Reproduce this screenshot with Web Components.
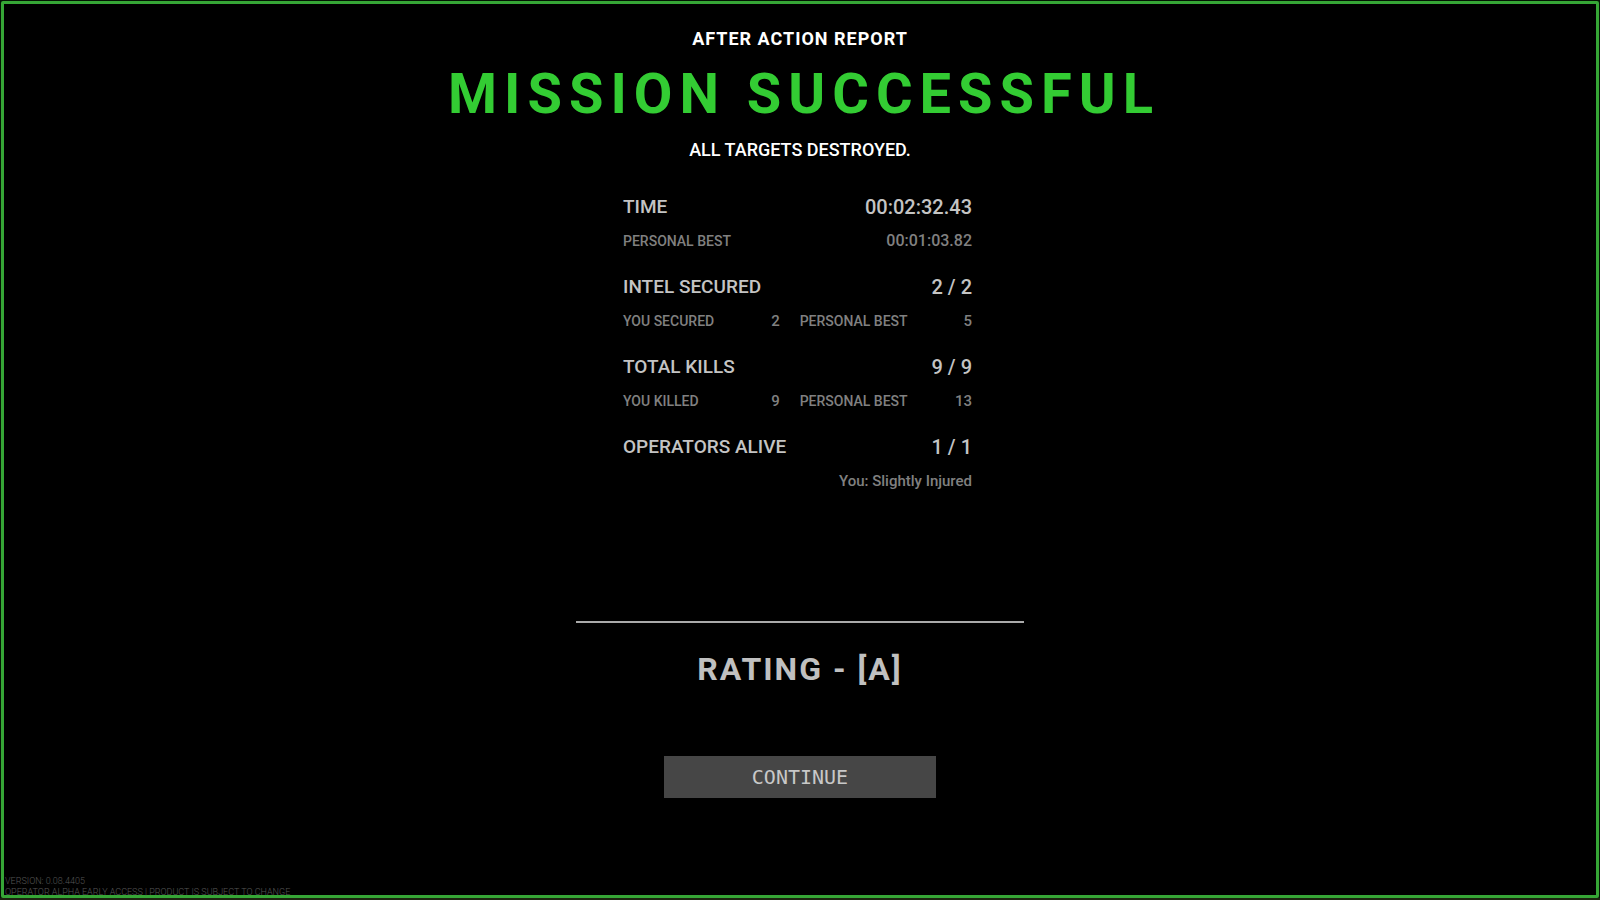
<!DOCTYPE html>
<html lang="en">
<head>
<meta charset="utf-8">
<title>After Action Report</title>
<style>
html, body { margin: 0; background: #000; }
body { font-family: Roboto, "Liberation Sans", sans-serif; color: #fff; }
</style>
</head>
<body>
<game-screen>
  <report-heading slot="heading">
    <span slot="kicker">AFTER ACTION REPORT</span>
    <span slot="title">MISSION SUCCESSFUL</span>
    <span slot="summary">ALL TARGETS DESTROYED.</span>
  </report-heading>
  <stat-list>
    <stat-group label="TIME" value="00:02:32.43">
      <stat-detail label="PERSONAL BEST" value="00:01:03.82" large></stat-detail>
    </stat-group>
    <stat-group label="INTEL SECURED" value="2 / 2">
      <stat-detail label="YOU SECURED" value="2"></stat-detail>
      <stat-detail label="PERSONAL BEST" value="5"></stat-detail>
    </stat-group>
    <stat-group label="TOTAL KILLS" value="9 / 9">
      <stat-detail label="YOU KILLED" value="9"></stat-detail>
      <stat-detail label="PERSONAL BEST" value="13"></stat-detail>
    </stat-group>
    <stat-group label="OPERATORS ALIVE" value="1 / 1">
      <stat-detail value="You: Slightly Injured"></stat-detail>
    </stat-group>
  </stat-list>
  <mission-rating>RATING - [A]</mission-rating>
  <action-button>CONTINUE</action-button>
  <build-info slot="footer">
    <span>VERSION: 0.08.4405</span>
    <span>OPERATOR ALPHA EARLY ACCESS | PRODUCT IS SUBJECT TO CHANGE</span>
  </build-info>
</game-screen>
<script>
const define = (name, html, setup) => {
  const template = document.createElement('template');
  template.innerHTML = html;
  customElements.define(name, class extends HTMLElement {
    constructor() {
      super();
      this.attachShadow({ mode: 'open' }).append(template.content.cloneNode(true));
    }
    connectedCallback() { if (setup) setup(this, this.shadowRoot); }
  });
};

const fillPair = (host, root) => {
  const label = root.querySelector('.label');
  if (label && host.hasAttribute('label')) label.textContent = host.getAttribute('label');
  else if (label) label.remove();
  root.querySelector('.value').textContent = host.getAttribute('value');
};

define('game-screen', `
<style>
:host { display: block; box-sizing: border-box; min-height: 100vh; padding: 1px 1px 2px;
  background: linear-gradient(to top, #1c2410 2px, #051505 2px); }
.frame { box-sizing: border-box; min-height: calc(100vh - 3px); border: 3px solid #36a636;
  border-radius: 2px; background: #000; display: flex; flex-direction: column; }
main { flex: 1; display: flex; flex-direction: column; align-items: center; padding-top: 23px; }
</style>
<div class="frame">
  <main><slot name="heading"></slot><slot></slot></main>
  <slot name="footer"></slot>
</div>`);

define('report-heading', `
<style>
:host { display: block; text-align: center; }
p, h1 { margin: 0; }
.kicker { font-size: 18px; line-height: 24px; font-weight: 700; letter-spacing: 1px; }
h1 { font-size: 56px; line-height: 64px; font-weight: 700; letter-spacing: 7px; color: #33cc33; padding: 11px 0 0 8px; }
.summary { font-size: 18px; line-height: 24px; font-weight: 500; padding-top: 12px; }
</style>
<p class="kicker"><slot name="kicker"></slot></p>
<h1><slot name="title"></slot></h1>
<p class="summary"><slot name="summary"></slot></p>`);

define('stat-list', `
<style>
:host { display: flex; flex-direction: column; gap: 24px; box-sizing: border-box;
  width: 448px; max-width: 100%; min-height: 461px; padding: 33px 52px 0 47px;
  border-bottom: 2px solid #aaa; }
</style>
<slot></slot>`);

define('stat-group', `
<style>
:host { display: block; color: #c4c4c4; }
.main { display: flex; justify-content: space-between; font-size: 20px; line-height: 24px; font-weight: 500; }
.label { font-size: 19px; }
.details { display: grid; grid-auto-flow: column; grid-auto-columns: auto; column-gap: 20px; padding-top: 12px; }
.details.two { grid-template-columns: 10fr 11fr; }
</style>
<div class="main"><span class="label"></span><span class="value"></span></div>
<div class="details"><slot></slot></div>`,
(host, root) => {
  fillPair(host, root);
  const details = root.querySelector('.details');
  const slot = root.querySelector('slot');
  const sync = () => details.classList.toggle('two', slot.assignedElements().length === 2);
  slot.addEventListener('slotchange', sync);
  sync();
});

define('stat-detail', `
<style>
:host { display: flex; justify-content: space-between; font-size: 14px; line-height: 20px;
  font-weight: 500; color: #808080; }
.value { margin-left: auto; font-size: 15px; }
:host([large]) .value { font-size: 16px; }
</style>
<span class="label"></span><span class="value"></span>`, fillPair);

define('mission-rating', `
<style>
:host { display: block; padding-top: 26px; }
h2 { margin: 0; font-size: 32px; line-height: 40px; font-weight: 700; letter-spacing: 2px; color: #c0c0c0; }
</style>
<h2><slot></slot></h2>`);

define('action-button', `
<style>
:host { display: block; padding-top: 67px; }
button { display: block; width: 272px; height: 42px; border: 0; padding: 0; background: #464646;
  color: #c8c8c8; font: 20px "DejaVu Sans Mono", monospace; cursor: pointer; }
button:hover { background: #555; }
</style>
<button type="button"><slot></slot></button>`);

define('build-info', `
<style>
:host { display: flex; flex-direction: column; font-size: 9px; line-height: 11px; font-weight: 300;
  color: #555; padding-left: 1px; margin-bottom: -3px; }
</style>
<slot></slot>`);
</script>
</body>
</html>
